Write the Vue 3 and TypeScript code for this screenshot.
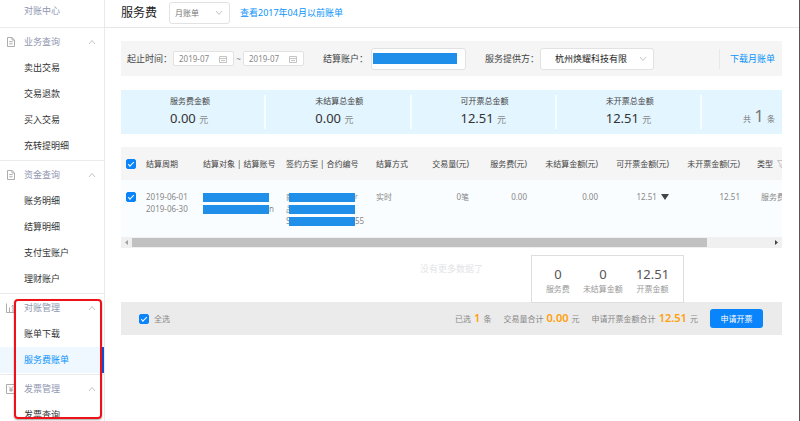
<script setup lang="ts">
import { ref } from 'vue'

interface MenuGroup {
  title: string
  icon: 'doc' | 'chart' | 'invoice'
  items: string[]
}

interface Stat {
  label: string
  value: string
}

const activeItem = ref('服务费账单')
const billType = ref('月账单')
const startMonth = ref('2019-07')
const endMonth = ref('2019-07')
const provider = ref('杭州焕耀科技有限')
const rowChecked = ref(true)
const allChecked = ref(true)

const groups: MenuGroup[] = [
  { title: '业务查询', icon: 'doc', items: ['卖出交易', '交易退款', '买入交易', '充转提明细'] },
  { title: '资金查询', icon: 'doc', items: ['账务明细', '结算明细', '支付宝账户', '理财账户'] },
  { title: '对账管理', icon: 'chart', items: ['账单下载', '服务费账单'] },
  { title: '发票管理', icon: 'invoice', items: ['发票查询'] },
]

const stats: Stat[] = [
  { label: '服务费金额', value: '0.00' },
  { label: '未结算总金额', value: '0.00' },
  { label: '可开票总金额', value: '12.51' },
  { label: '未开票总金额', value: '12.51' },
]

const totals: Stat[] = [
  { label: '服务费', value: '0' },
  { label: '未结算金额', value: '0' },
  { label: '开票金额', value: '12.51' },
]
</script>

<template>
  <div class="shell">
    <aside class="sidebar">
      <a class="home" href="#">对账中心</a>
      <nav>
        <section v-for="group in groups" :key="group.title" class="group">
          <button class="group-head" type="button">
            <svg v-if="group.icon === 'doc'" class="group-icon" viewBox="0 0 10 10">
              <path d="M1.5.5h4.6l2.4 2.4v6.6h-7zM6 .7V3h2.3M3.2 4.6h3.4M3.2 6.8h3.4" />
            </svg>
            <svg v-else-if="group.icon === 'chart'" class="group-icon" viewBox="0 0 10 10">
              <path d="M.5.5v9h9.5M3.500 9V4.500M5.500 3.500l1.500-1.500v7M9 2v7" />
            </svg>
            <svg v-else class="group-icon" viewBox="0 0 10 10">
              <path d="M.5.5h9v9h-9zM3 2.5l2 2.3 2-2.3M5 4.8V8M3.2 5.2h3.6M3.2 6.6h3.6" />
            </svg>
            <span>{{ group.title }}</span>
            <svg class="arrow" viewBox="0 0 8 6"><path d="M1 5l3-3.500L7 5" /></svg>
          </button>
          <a
            v-for="item in group.items"
            :key="item"
            href="#"
            class="item"
            :class="{ active: item === activeItem }"
            @click.prevent="activeItem = item"
          >{{ item }}</a>
        </section>
      </nav>
      <div class="highlight"></div>
    </aside>

    <main class="main">
      <header class="header">
        <h1>服务费</h1>
        <div class="select bill">
          <select v-model="billType" aria-label="账单类型">
            <option>月账单</option>
          </select>
          <svg class="arrow" viewBox="0 0 8 6"><path d="M1 1l3 3.500L7 1" /></svg>
        </div>
        <a href="#" class="link">查看2017年04月以前账单</a>
      </header>

      <div class="content">
        <form class="filters" @submit.prevent>
          <label class="name" for="start">起止时间：</label>
          <div class="date">
            <input id="start" v-model="startMonth" type="text" />
            <svg viewBox="0 0 8 8"><path d="M.5 1.500h7v6h-7zM.5 3.500h7M2 5.500h4" /></svg>
          </div>
          <span class="tilde">~</span>
          <div class="date">
            <input v-model="endMonth" type="text" aria-label="结束月份" />
            <svg viewBox="0 0 8 8"><path d="M.5 1.500h7v6h-7zM.5 3.500h7M2 5.500h4" /></svg>
          </div>
          <label class="name account-name" for="account">结算账户：</label>
          <div class="account">
            <input id="account" type="text" readonly />
            <span class="mask"></span>
          </div>
          <label class="name provider-name" for="provider">服务提供方：</label>
          <div class="select provider">
            <select id="provider" v-model="provider">
              <option>杭州焕耀科技有限</option>
            </select>
            <svg class="arrow" viewBox="0 0 8 6"><path d="M1 1l3 3.500L7 1" /></svg>
          </div>
          <a href="#" class="link download">下载月账单</a>
        </form>

        <section class="stats">
          <div v-for="stat in stats" :key="stat.label" class="stat">
            <div class="stat-label">{{ stat.label }}</div>
            <div class="stat-value">{{ stat.value }} <small>元</small></div>
          </div>
          <div class="count">共 <b>1</b> 条</div>
        </section>

        <div class="table-wrap">
          <table>
            <colgroup>
              <col class="c-check" /><col class="c-period" /><col class="c-target" /><col class="c-plan" />
              <col class="c-way" /><col class="c-volume" /><col class="c-fee" /><col class="c-sum" />
              <col class="c-sum" /><col class="c-sum" /><col class="c-type" />
            </colgroup>
            <thead>
              <tr>
                <th class="check"><input v-model="rowChecked" type="checkbox" aria-label="选择本页" /></th>
                <th>结算周期</th>
                <th>结算对象 | 结算账号</th>
                <th>签约方案 | 合约编号</th>
                <th>结算方式</th>
                <th class="num">交易量(元)</th>
                <th class="num">服务费(元)</th>
                <th class="num">未结算金额(元)</th>
                <th class="num">可开票金额(元)</th>
                <th class="num">未开票金额(元)</th>
                <th class="type">
                  类型
                  <svg class="funnel" viewBox="0 0 8 8"><path d="M.5.5h7L5 4v3.500L3 6.500V4z" /></svg>
                </th>
              </tr>
            </thead>
            <tbody>
              <tr>
                <td class="check"><input v-model="rowChecked" type="checkbox" aria-label="选择账单" /></td>
                <td>2019-06-01<br />2019-06-30</td>
                <td>
                  <div class="line"><span class="mask"></span></div>
                  <div class="line"><span class="mask"></span>n</div>
                </td>
                <td>
                  <div class="line"><span class="peek">商</span><span class="mask"></span><sup>r</sup></div>
                  <div class="line"><span class="peek">品</span><span class="mask"></span></div>
                  <div class="line"><span class="peek">S</span><span class="mask"></span>55</div>
                </td>
                <td>实时</td>
                <td class="num">0笔</td>
                <td class="num">0.00</td>
                <td class="num">0.00</td>
                <td class="num">12.51 <svg class="caret" viewBox="0 0 8 6"><path d="M0 0h8L4 6z" /></svg></td>
                <td class="num">12.51</td>
                <td class="type kind">服务费</td>
              </tr>
            </tbody>
          </table>
        </div>
        <div class="scrollbar">
          <svg class="step" viewBox="0 0 11 11"><path class="dim" d="M7 3v5L4 5.500z" /></svg>
          <div class="thumb"></div>
          <svg class="step end" viewBox="0 0 11 11"><path d="M4 3v5l3-2.500z" /></svg>
        </div>

        <div class="more">
          没有更多数据了
          <div class="totals">
            <div v-for="total in totals" :key="total.label" class="total">
              <strong>{{ total.value }}</strong>
              <span>{{ total.label }}</span>
            </div>
          </div>
        </div>

        <footer class="summary">
          <label class="all"><input v-model="allChecked" type="checkbox" />全选</label>
          <span class="sum">已选 <b>1</b> 条</span>
          <span class="sum">交易量合计 <b>0.00</b> 元</span>
          <span class="sum">申请开票金额合计 <b>12.51</b> 元</span>
          <button class="apply" type="button">申请开票</button>
        </footer>
      </div>
    </main>
  </div>
</template>

<style>
body {
  margin: 0;
  background: #fff;
}
</style>

<style scoped>
.shell {
  display: flex;
  height: 100vh;
  overflow: hidden;
  font-family: "Noto Sans", "Noto Sans CJK SC", sans-serif;
  font-size: 8px;
  line-height: 12px;
  color: #444;
}
.shell *,
.shell *::before {
  box-sizing: border-box;
}
a {
  text-decoration: none;
}
button,
input,
select {
  margin: 0;
  padding: 0;
  border: 0;
  background: none;
  font: inherit;
  color: inherit;
  outline: 0;
}
svg {
  fill: none;
  stroke: #c4c4c4;
  stroke-width: 1;
  flex: none;
}

/* Sidebar */
.sidebar {
  position: relative;
  flex: 0 0 105px;
  border-right: 1px solid #e9e9e9;
  font-size: 9px;
}
.home {
  display: block;
  height: 27px;
  padding-left: 24px;
  line-height: 22px;
  color: #8f96b0;
}
.group {
  padding-bottom: 1px;
  border-top: 1px solid #ebebeb;
}
.group-head {
  display: flex;
  align-items: center;
  gap: 8px;
  width: 100%;
  height: 27px;
  padding: 0 8px 0 6px;
  color: #8f96b0;
}
.group-icon {
  width: 10px;
  height: 10px;
  stroke: #adadad;
}
.arrow {
  width: 8px;
  height: 6px;
}
.group-head .arrow {
  margin-left: auto;
}
.item {
  display: block;
  height: 26px;
  padding-left: 24px;
  line-height: 26px;
  color: #333;
}
.item.active {
  background: #eff7ff;
  border-right: 2px solid #1453d8;
  color: #0a93fa;
}
.highlight {
  position: absolute;
  top: 299px;
  left: 14px;
  width: 88px;
  height: 120px;
  border: 2px solid #ee1118;
  border-radius: 4px;
  box-shadow: 0 1px 2px rgba(0, 0, 0, 0.35);
  pointer-events: none;
}

/* Page head */
.main {
  flex: 1;
  min-width: 0;
  border-right: 1px solid #555;
}
.header {
  display: flex;
  align-items: center;
  height: 28px;
  padding: 0 16px 2px;
  border-bottom: 1px solid #e6e6e6;
}
h1 {
  margin: 0;
  font-size: 12px;
  font-weight: 400;
  color: #222;
}
.link {
  font-size: 9px;
  color: #0a93fa;
}
.select {
  display: flex;
  align-items: center;
  position: relative;
  height: 22px;
  border: 1px solid #e2e2e2;
  border-radius: 3px;
  background: #fff;
}
.select select {
  width: 100%;
  height: 100%;
  padding-left: 5px;
  appearance: none;
}
.select .arrow {
  position: absolute;
  right: 6px;
  pointer-events: none;
}
.bill {
  width: 61px;
  margin: 0 10px 0 12px;
  color: #777;
}

/* Filters */
.content {
  padding: 13px 17px 0 16px;
}
.filters {
  display: flex;
  align-items: center;
  height: 35px;
  padding: 0 7px 0 6px;
  background: #f5f5f5;
}
.name {
  width: 46px;
  font-size: 9px;
  white-space: nowrap;
}
.date {
  display: flex;
  align-items: center;
  width: 61px;
  height: 15px;
  padding: 0 6px 0 5px;
  border: 1px solid #e2e2e2;
  border-radius: 2px;
  background: #fff;
  color: #888;
}
.date input {
  flex: 1;
  min-width: 0;
}
.date svg {
  width: 8px;
  height: 8px;
}
.tilde {
  width: 9px;
  text-align: center;
  color: #888;
}
.account-name {
  width: 48px;
  margin-left: 19px;
}
.account {
  display: flex;
  align-items: center;
  position: relative;
  width: 95px;
  height: 22px;
  border: 1px solid #e2e2e2;
  border-radius: 3px;
  background: #fff;
}
.account input {
  width: 100%;
}
.mask {
  position: relative;
  flex: none;
  width: 66px;
  height: 9px;
  background: #1f8fe9;
}
.account .mask {
  position: absolute;
  left: 1px;
  width: 84px;
  height: 11px;
}
.provider-name {
  width: 55px;
  margin-left: 19px;
}
.provider {
  width: 114px;
  font-size: 9px;
  color: #222;
}
.provider select {
  padding-left: 14px;
}
.download {
  margin-left: auto;
  padding-left: 10px;
  border-left: 1px solid #e8e8e8;
  line-height: 20px;
}

/* Amount overview */
.stats {
  display: grid;
  grid-template-columns: repeat(4, 1fr) 80px;
  margin-top: 14px;
  padding: 5px 0;
  background: #e3f5ff;
}
.stat {
  height: 34px;
  padding-left: 49px;
  border-right: 2px solid #f6fcff;
}
.stat-value {
  margin-top: 2px;
  font-size: 13px;
  line-height: 18px;
  color: #333;
}
.stat-value small {
  font-size: 9px;
  color: #888;
}
.count {
  padding: 11px 7px 0 0;
  text-align: right;
  line-height: 20px;
  color: #777;
}
.count b {
  margin: 0 1px;
  font-size: 17px;
  font-weight: 400;
}

/* Bill table */
.table-wrap {
  margin-top: 13px;
  overflow: hidden;
  background: #fafdff;
}
table {
  width: 690px;
  border-collapse: collapse;
  table-layout: fixed;
}
.c-check { width: 25px; }
.c-period { width: 57px; }
.c-target { width: 83px; }
.c-plan { width: 90px; }
.c-way { width: 49px; }
.c-volume { width: 44px; }
.c-fee { width: 58px; }
.c-sum { width: 71px; }
th,
td {
  padding: 0;
  text-align: left;
  font-weight: 400;
  white-space: nowrap;
}
th {
  height: 33px;
  background: #f5f5f5;
}
td {
  height: 57px;
  padding-top: 11px;
  vertical-align: top;
  color: #888;
}
.num {
  text-align: right;
}
.check {
  padding-left: 5px;
}
.type {
  padding-left: 17px;
}
.kind {
  padding-left: 21px;
}
input[type="checkbox"] {
  display: block;
  width: 10px;
  height: 10px;
  appearance: none;
  border: 1px solid #bbb;
  border-radius: 2px;
  background: #fff;
}
input[type="checkbox"]:checked {
  border-color: #0a84fa;
  background: #0a84fa;
}
input[type="checkbox"]:checked::before {
  content: "";
  display: block;
  width: 6px;
  height: 3px;
  margin: 2px 0 0 1px;
  border: solid #fff;
  border-width: 0 0 1px 1px;
  transform: rotate(-45deg);
}
td.check input {
  margin-top: 1px;
}
.line {
  display: flex;
  align-items: center;
  height: 12px;
}
.peek {
  width: 3px;
}
.funnel {
  width: 8px;
  height: 8px;
  margin-left: 2px;
  vertical-align: middle;
}
.caret {
  width: 8px;
  height: 6px;
  margin-left: 2px;
  fill: #444;
  stroke: none;
}
.scrollbar {
  display: flex;
  align-items: center;
  height: 11px;
  background: #f0f0f0;
}
.thumb {
  width: 87%;
  height: 9px;
  background: #c1c1c1;
}
.step {
  width: 11px;
  height: 11px;
  fill: #444;
  stroke: none;
}
.step .dim {
  fill: #a0a0a0;
}
.end {
  margin-left: auto;
}

/* List end and selection totals */
.more {
  position: relative;
  height: 54px;
  padding-top: 15px;
  text-align: center;
  font-size: 9px;
  color: #e3e3e6;
}
.totals {
  display: flex;
  justify-content: center;
  gap: 13px;
  position: absolute;
  right: 98px;
  bottom: -1px;
  width: 153px;
  height: 48px;
  padding-top: 10px;
  border: 1px solid #dedede;
  background: #fff;
  font-size: 8px;
  color: #999;
}
.total {
  display: flex;
  flex-direction: column;
  align-items: center;
}
.total strong {
  font-size: 13px;
  font-weight: 400;
  line-height: 17px;
  color: #555;
}
.summary {
  display: flex;
  align-items: center;
  height: 33px;
  padding: 0 19px 0 18px;
  background: #ebebeb;
  color: #888;
}
.all {
  display: flex;
  align-items: center;
  gap: 5px;
  margin-right: auto;
}
.sum {
  margin-right: 12px;
  line-height: 16px;
}
.sum b {
  margin: 0 1px;
  font-size: 11px;
  font-weight: 600;
  color: #ff9f0a;
}
.apply {
  width: 53px;
  height: 19px;
  border-radius: 3px;
  background: #0a84fa;
  color: #fff;
}
</style>
